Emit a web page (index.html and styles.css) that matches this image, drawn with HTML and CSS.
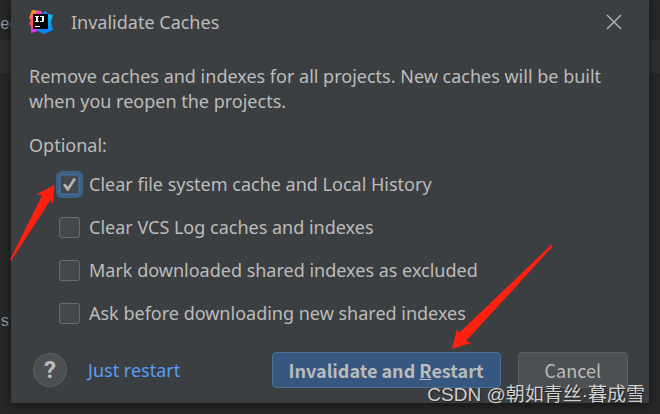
FILE: index.html
```
<!DOCTYPE html>
<html lang="en">

<head>
  <meta charset="UTF-8" />
  <meta name="viewport" content="width=device-width, initial-scale=1.0" />
  <title>Invalidate Caches</title>
  <link rel="stylesheet" href="styles.css">
</head>

<body>
  <div class="editor" aria-hidden="true">
    <div class="caret-line"></div>
    <span class="code code-top">e<i>c</i></span>
    <span class="code code-bottom">s:</span>
  </div>

  <form class="dialog">
    <header class="title-bar">
      <svg class="logo" viewBox="0 0 24 24">
        <defs>
          <linearGradient id="warm" x1="0" y1="0" x2="0" y2="1">
            <stop offset="0" stop-color="#fc9a2c" />
            <stop offset="0.5" stop-color="#fb5a4f" />
            <stop offset="1" stop-color="#fe2a8d" />
          </linearGradient>
          <linearGradient id="cool" x1="0" y1="0" x2="0" y2="1">
            <stop offset="0" stop-color="#12c8f4" />
            <stop offset="1" stop-color="#087cfa" />
          </linearGradient>
        </defs>
        <path fill="url(#warm)" d="M3 0 12 1 13 12 11 20 2 23 2 17 0 13 2 11 0 8z" />
        <path fill="#f43ac0" d="M8 1 13 2 13 7 5 8 2 10 4 6z" />
        <path fill="#d43af5" d="M2 19 12 19 8 21 2 23z" />
        <path fill="url(#cool)" d="M12 6 16 1 19 4 24 5 22 12 24 20 15 24 7 20 12 18z" />
        <path fill="#1a6fe8" d="M12 4 16 1 18 5z" />
        <path d="M4 4h15v15H4z" />
        <path fill="#fff" d="M6 6h4v1H9v4h1v1H6v-1h1V7H6zM11 6h4v5l-1 1h-3v-1h2V7h-2zM6 16h5v1H6z" />
      </svg>
      <h1>Invalidate Caches</h1>
      <button type="button" class="close" aria-label="Close">
        <svg viewBox="0 0 16 16">
          <path d="M1 1 15 15M15 1 1 15" />
        </svg>
      </button>
    </header>

    <p class="message">Remove caches and indexes for all projects. New caches will be built<br>when you reopen the projects.</p>

    <fieldset class="options">
      <legend>Optional:</legend>
      <label><input type="checkbox" checked> Clear file system cache and Local History</label>
      <label><input type="checkbox"> Clear VCS Log caches and indexes</label>
      <label><input type="checkbox"> Mark downloaded shared indexes as excluded</label>
      <label><input type="checkbox"> Ask before downloading new shared indexes</label>
    </fieldset>

    <footer class="actions">
      <button type="button" class="help" aria-label="Help">?</button>
      <a href="#">Just restart</a>
      <button type="submit" class="btn btn-primary">Invalidate and <u>R</u>estart</button>
      <button type="button" class="btn">Cancel</button>
    </footer>
  </form>

  <svg class="arrow arrow-check" viewBox="0 0 46 78">
    <path d="M45.500 1 28 10 33 11.500 1 76 2 77 41.500 16 44 20z" />
  </svg>
  <svg class="arrow arrow-restart" viewBox="0 0 102 106">
    <path d="M1 105 6 85 8 89 100 1 102 2 15 97 20 99z" />
  </svg>
  <div class="watermark">CSDN @朝如青丝·暮成雪</div>
</body>

</html>
```
FILE: styles.css
```
* {
  box-sizing: border-box;
}

body {
  margin: 0;
  position: relative;
  min-height: 100vh;
  padding: 0 11px 11px;
  overflow: hidden;
  background-color: #272727;
  color: #bbbbbb;
  font-family: "Noto Sans", sans-serif;
  font-size: 18px;
  line-height: 25px;
}

/* editor behind the dialog */
.editor {
  position: absolute;
  inset: 0;
}

.caret-line {
  position: absolute;
  top: 40px;
  width: 100%;
  height: 33px;
  background-color: #2e2e2e;
}

.code {
  position: absolute;
  left: 0;
  color: #8d99a6;
  font-family: "Liberation Mono", monospace;
  font-size: 16px;
}

.code i {
  color: #54708f;
  font-style: normal;
}

.code-top {
  top: 13px;
}

.code-bottom {
  top: 310px;
}

.dialog {
  position: relative;
  padding: 0 18px 15px;
  background-color: #3c3f41;
  box-shadow: 0 2px 10px rgba(0, 0, 0, 0.5);
}

.title-bar {
  display: flex;
  align-items: center;
  height: 44px;
}

.logo {
  width: 24px;
  height: 24px;
}

h1 {
  flex: 1;
  margin: 0 0 0 18px;
  font-size: 18px;
  font-weight: normal;
}

button {
  font-family: inherit;
  font-size: inherit;
  color: inherit;
}

.close {
  display: flex;
  margin-right: 9px;
  padding: 0;
  border: none;
  background: none;
}

.close svg {
  width: 16px;
  height: 16px;
  fill: none;
  stroke: #afb1b3;
  stroke-width: 1.5;
}

.message {
  margin: 20px 0 19px;
}

.options {
  margin: 0;
  padding: 5px 0 0;
  border: none;
}

.options legend {
  padding: 0;
}

.options label {
  display: flex;
  align-items: center;
  gap: 9px;
  height: 43px;
  padding-left: 30px;
}

.options input {
  appearance: none;
  display: grid;
  place-content: center;
  width: 21px;
  height: 21px;
  margin: 0;
  border: 1px solid #6b6b6b;
  border-radius: 3px;
  background-color: #43494a;
}

.options input:checked {
  border-color: #466d94;
  box-shadow: 0 0 0 3px #3d6185, inset 0 0 0 1px #3d6185;
}

.options input:checked::before {
  content: "";
  width: 13px;
  height: 13px;
  background-color: #b4b4b4;
  clip-path: polygon(0 52%, 15% 42%, 38% 68%, 82% 0, 100% 10%, 42% 100%, 32% 100%);
}

.actions {
  display: flex;
  align-items: center;
  margin-top: 17px;
  padding: 0 3px 0 4px;
}

.help {
  width: 34px;
  height: 34px;
  padding: 0;
  border: 1px solid #5e6060;
  border-radius: 50%;
  background-color: #4c5052;
  font-family: Roboto, sans-serif;
  font-size: 24px;
  font-weight: bold;
  line-height: 30px;
}

.actions a {
  margin: 0 auto 0 21px;
  color: #589df6;
  text-decoration: none;
}

.btn {
  height: 36px;
  margin-left: 17px;
  padding: 0 26px;
  border: 1px solid #5e6060;
  border-radius: 4px;
  background-color: #4c5052;
  font-family: "Noto Sans CJK SC", sans-serif;
}

.btn-primary {
  padding: 0 16px;
  border-color: #4c708c;
  background-color: #365880;
  font-weight: bold;
}

/* marks drawn over the dialog */
.arrow {
  position: absolute;
  fill: #ff2010;
}

.arrow-check {
  left: 9px;
  top: 184px;
  width: 46px;
  height: 78px;
}

.arrow-restart {
  left: 451px;
  top: 244px;
  width: 102px;
  height: 106px;
}

.watermark {
  position: absolute;
  right: 15px;
  bottom: 7px;
  color: #d0d0d0;
  font-family: "Liberation Sans", "Noto Sans CJK SC", sans-serif;
  font-size: 19px;
  text-shadow: 1px 1px 1px #222222;
}
```
